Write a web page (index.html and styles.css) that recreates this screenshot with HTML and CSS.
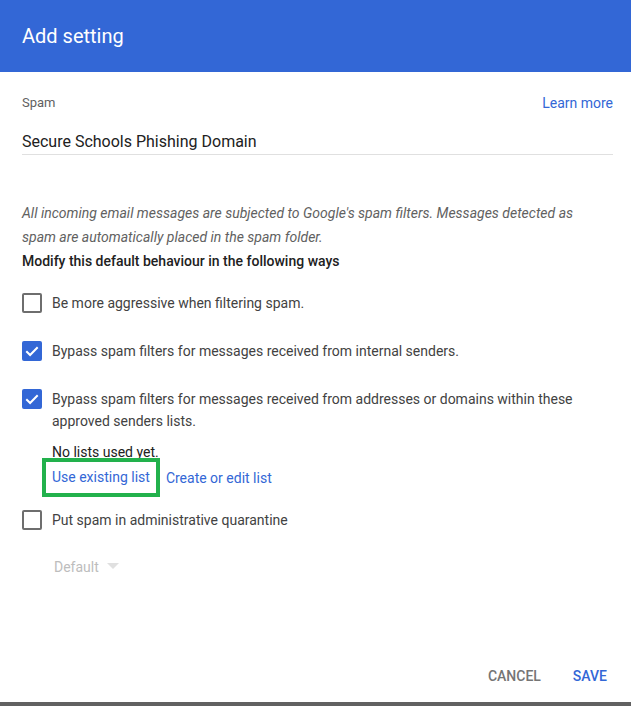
FILE: index.html
```html
<!DOCTYPE html>
<html>
<head>
<meta charset="utf-8">
<link rel="stylesheet" href="styles.css">
</head>
<body>
<div class="dialog">
  <div class="header">Add setting</div>
  <div class="content">
    <div class="label-row">
      <span class="label">Spam</span>
      <a class="link">Learn more</a>
    </div>
    <div class="name">Secure Schools Phishing Domain</div>
    <p class="desc">All incoming email messages are subjected to Google's spam filters. Messages detected as spam are automatically placed in the spam folder.</p>
    <div class="bold">Modify this default behaviour in the following ways</div>

    <div class="check-row first">
      <span class="box"></span>
      <span class="check-text">Be more aggressive when filtering spam.</span>
    </div>
    <div class="check-row">
      <span class="box checked"><svg viewBox="0 0 20 20" width="20" height="20"><path d="M4.3 10.2 L8.1 14 L15.7 6.2" fill="none" stroke="#fff" stroke-width="2"/></svg></span>
      <span class="check-text">Bypass spam filters for messages received from internal senders.</span>
    </div>
    <div class="check-row">
      <span class="box checked"><svg viewBox="0 0 20 20" width="20" height="20"><path d="M4.3 10.2 L8.1 14 L15.7 6.2" fill="none" stroke="#fff" stroke-width="2"/></svg></span>
      <span class="check-text">Bypass spam filters for messages received from addresses or domains within these approved senders lists.</span>
    </div>
    <div class="sub">
      <div class="no-lists">No lists used yet.</div>
      <div class="links">
        <a class="link highlight">Use existing list</a>
        <a class="link">Create or edit list</a>
      </div>
    </div>
    <div class="check-row last">
      <span class="box"></span>
      <span class="check-text">Put spam in administrative quarantine</span>
    </div>
    <div class="select">
      <span>Default</span>
      <span class="caret"></span>
    </div>
  </div>
  <div class="footer">
    <a class="btn cancel">CANCEL</a>
    <a class="btn save">SAVE</a>
  </div>
  <div class="bottom-bar"></div>
</div>
</body>
</html>
```
FILE: styles.css
```css
* { box-sizing: border-box; }
html, body { margin: 0; padding: 0; background: #fff; }
body { font-family: Roboto, "Liberation Sans", Arial, sans-serif; color: #212121; }
.dialog { width: 631px; height: 706px; display: flex; flex-direction: column; }
.header {
  height: 72px; background: #3367d6; color: #fff;
  font-size: 20px; line-height: 72px; padding-left: 22px; flex: none;
}
.content { padding: 0 18px 0 22px; flex: 1; }
.label-row { display: flex; justify-content: space-between; margin-top: 21px; line-height: 20px; }
.label { font-size: 13px; color: #616161; }
.link { color: #3367d6; font-size: 14px; cursor: pointer; }
.name {
  margin-top: 17px; font-size: 16px; line-height: 24px; color: #212121;
  border-bottom: 1px solid #e0e0e0;
}
.desc {
  margin: 46px 0 0; max-width: 575px; font-size: 14px; line-height: 24px; font-style: italic; color: #616161;
}
.bold { font-size: 14px; font-weight: 500; line-height: 24px; color: #212121; }
.check-row { display: flex; align-items: flex-start; margin-top: 26px; line-height: 22px; font-size: 14px; color: #424242; }
.check-row.first { margin-top: 19px; }
.check-row.last { margin-top: 12px; }
.box {
  flex: none; width: 20px; height: 20px; margin: 1px 10px 0 0;
  border: 2px solid #6e6e6e; border-radius: 2px; display: flex;
}
.box.checked { background: #3367d6; border: none; }
.check-text { flex: 1; }
.sub { padding-left: 30px; font-size: 14px; color: #212121; }
.no-lists { margin-top: 10px; line-height: 20px; color: #212121; }
.links { margin-top: -4px; display: flex; align-items: center; gap: 6px; line-height: 20px; }
.highlight {
  border: 4px solid #22b14c; padding: 5px 6px 6px; margin-left: -10px;
}
.select { margin-top: 26px; padding-left: 32px; font-size: 14px; color: #bdbdbd; display: flex; align-items: center; gap: 8px; line-height: 20px; }
.caret { width: 0; height: 0; border-left: 6px solid transparent; border-right: 6px solid transparent; border-top: 6px solid #e0e0e0; margin-top: -2px; }
.footer { display: flex; justify-content: flex-end; gap: 32px; padding: 0 24px 16px 0; flex: none; }
.btn { font-size: 14px; font-weight: 500; line-height: 20px; }
.cancel { color: #757575; }
.save { color: #3367d6; }
.bottom-bar { height: 4px; background: #616161; flex: none; }
```
